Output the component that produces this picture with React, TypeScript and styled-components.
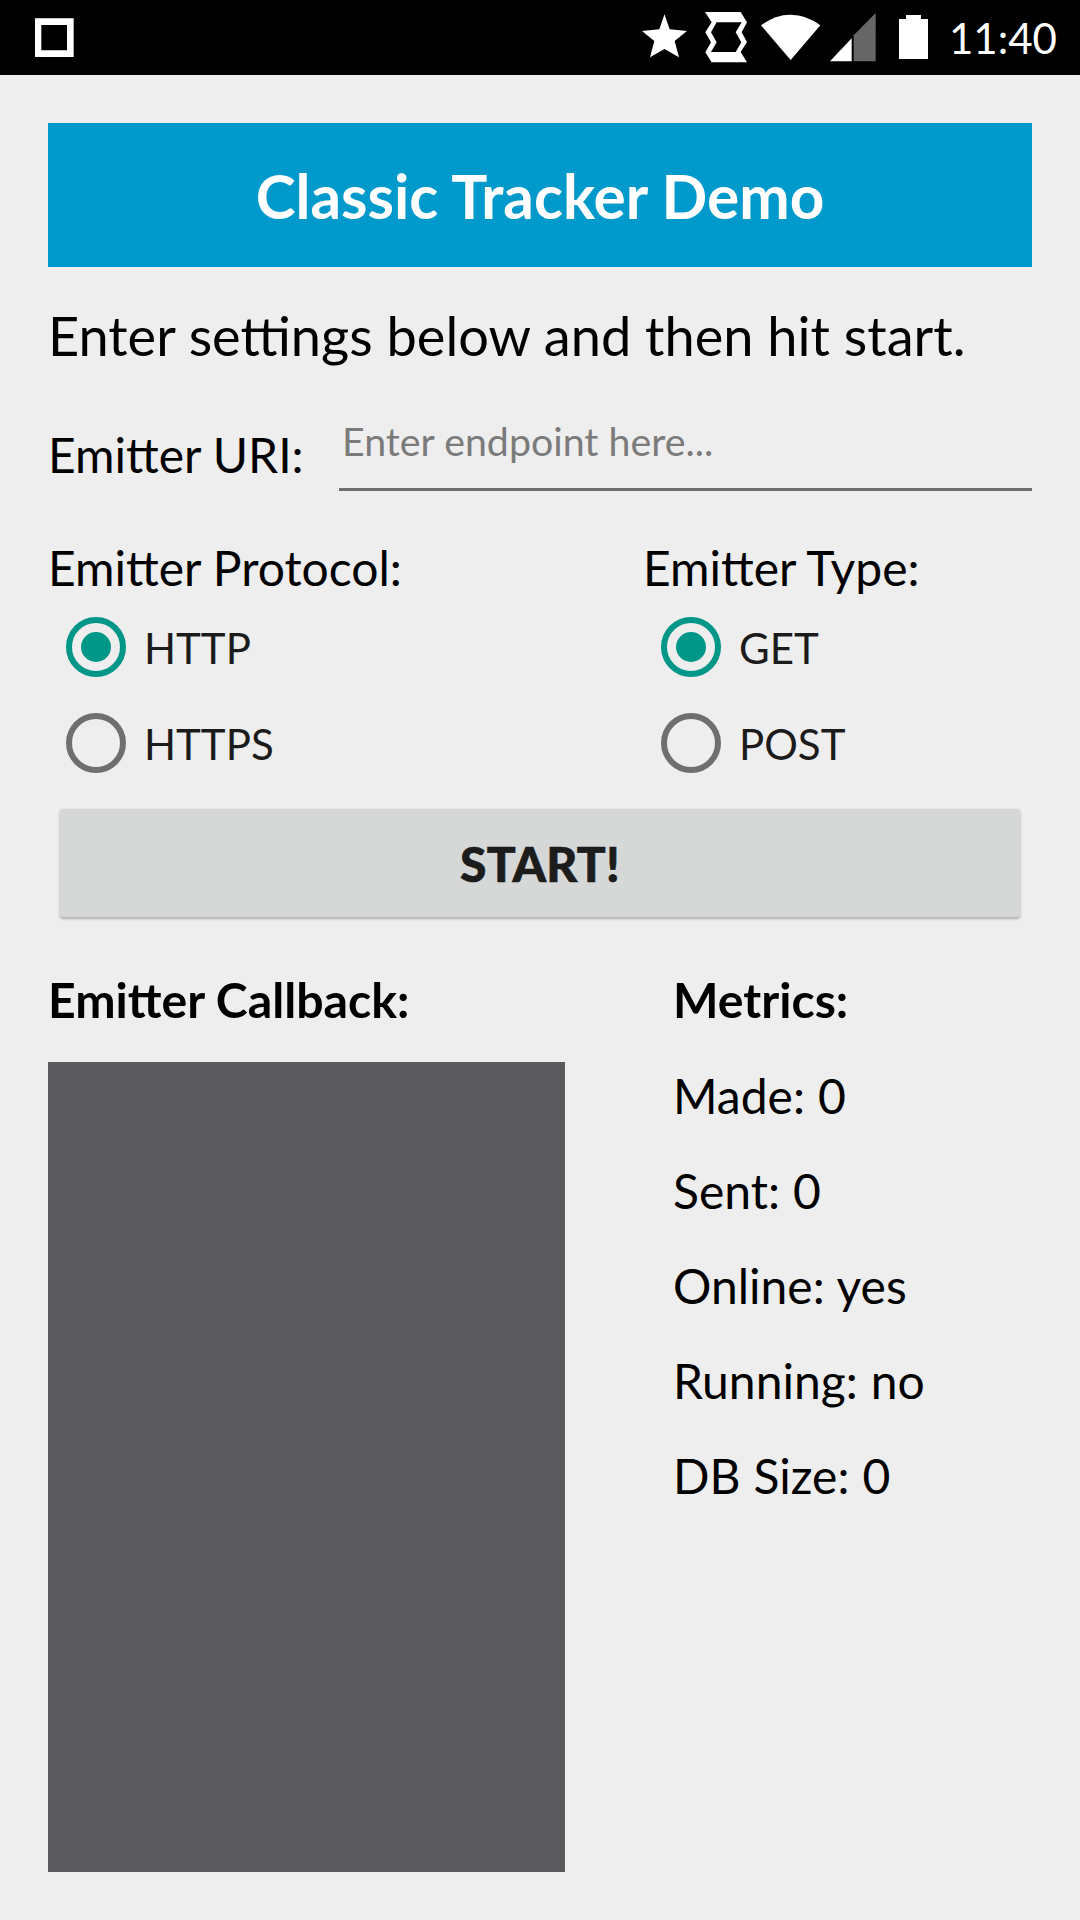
import React, { useState } from "react";
import styled, { createGlobalStyle } from "styled-components";

const GlobalStyle = createGlobalStyle`
  *, *::before, *::after { box-sizing: border-box; }
  body {
    margin: 0;
    background: #eeeeee;
    font-family: Lato, "Open Sans", sans-serif;
    color: #000;
  }
`;

const Screen = styled.div`
  display: flex;
  flex-direction: column;
  width: 1080px;
  height: 1920px;
  overflow: hidden;
  background: #eeeeee;
`;

const StatusBar = styled.header`
  display: flex;
  flex: none;
  height: 75px;
  padding: 0 24px 0 35px;
  background: #000;
  color: #fff;
`;

const Icon = styled.svg<{ $w: number; $gap?: number }>`
  display: block;
  flex: none;
  width: ${(p) => p.$w}px;
  height: 75px;
  margin-left: ${(p) => p.$gap ?? 0}px;
  fill: #fff;
`;

const SystemIcons = styled.div`
  display: flex;
  margin-left: auto;
`;

const Clock = styled.time`
  width: 107px;
  margin-left: 21px;
  font-size: 42px;
  line-height: 76px;
  white-space: nowrap;
`;

const Content = styled.main`
  display: flex;
  flex: 1;
  flex-direction: column;
  min-height: 0;
  padding: 48px;
`;

const Title = styled.h1`
  flex: none;
  height: 144px;
  margin: 0;
  background: #0099cc;
  color: #fff;
  font-size: 60.25px;
  font-weight: 700;
  line-height: 146px;
  text-align: center;
`;

const Intro = styled.p`
  flex: none;
  height: 136px;
  margin: 0;
  font-size: 54.15px;
  line-height: 138px;
  white-space: nowrap;
`;

const Label = styled.span<{ $line: number; $bold?: boolean }>`
  display: block;
  flex: none;
  height: ${(p) => p.$line}px;
  font-size: ${(p) => (p.$bold ? 48.2 : 48)}px;
  font-weight: ${(p) => (p.$bold ? 700 : 400)};
  line-height: ${(p) => p.$line}px;
  white-space: nowrap;
`;

const UriRow = styled.div`
  display: flex;
  flex: none;
  align-items: stretch;
  justify-content: space-between;
  height: 88px;
  padding-top: 4px;
`;

const UriField = styled.div`
  width: 693px;
  padding-left: 3px;
  border-bottom: 3px solid #6f6f6f;
  color: #7b7b7b;
  font-size: 39.35px;
  line-height: 68px;
  white-space: nowrap;
`;

const Options = styled.div`
  display: grid;
  flex: none;
  grid-template-columns: 595px 1fr;
  height: 304px;
  padding-top: 49px;
`;

const GroupLabel = styled(Label)`
  margin-bottom: 4px;
`;

const OptionRow = styled.button`
  display: flex;
  align-items: center;
  height: 96px;
  padding: 0 0 0 18px;
  border: 0;
  background: none;
  color: #1b1b1b;
  font-family: inherit;
  font-size: 42px;
  text-align: left;
`;

const OptionText = styled.span`
  padding-top: 2px;
`;

const RadioMark = styled.span<{ $on: boolean }>`
  display: flex;
  align-items: center;
  justify-content: center;
  flex: none;
  width: 60px;
  height: 60px;
  margin-right: 18px;
  border: 6px solid ${(p) => (p.$on ? "#009688" : "#6f6f6f")};
  border-radius: 50%;

  &::after {
    content: "";
    width: 30px;
    height: 30px;
    border-radius: 50%;
    background: ${(p) => (p.$on ? "#009688" : "transparent")};
  }
`;

const StartButton = styled.button`
  flex: none;
  height: 108px;
  margin: 14px 12px 0;
  padding: 2px 0 0;
  border: 0;
  border-radius: 3px;
  background: #d6d8d7;
  box-shadow: 0 2px 3px rgba(0, 0, 0, 0.26), 0 0 2px rgba(0, 0, 0, 0.1);
  color: #1c1c1c;
  font-family: inherit;
  font-size: 48px;
  font-weight: 900;
  letter-spacing: 0.2px;
  line-height: 106px;
  -webkit-text-stroke: 0.6px #1c1c1c;
`;

const Results = styled.section`
  display: grid;
  flex: 1;
  grid-template-columns: 517px 1fr;
  column-gap: 108px;
  min-height: 0;
  padding-top: 53px;
`;

const Column = styled.div`
  display: flex;
  flex-direction: column;
`;

const LogPanel = styled.div`
  flex: 1;
  margin-top: 33px;
  background: #5a5a5c;
`;

const MetricList = styled.div`
  display: flex;
  flex-direction: column;
  padding-top: 19px;
  word-spacing: 0.7px;
`;

function RadioGroup({ label, options }: { label: string; options: string[] }) {
  const [selected, setSelected] = useState(options[0]);
  return (
    <Column role="radiogroup" aria-label={label}>
      <GroupLabel $line={55}>{label}</GroupLabel>
      {options.map((option) => (
        <OptionRow
          key={option}
          type="button"
          role="radio"
          aria-checked={option === selected}
          onClick={() => setSelected(option)}
        >
          <RadioMark $on={option === selected} />
          <OptionText>{option}</OptionText>
        </OptionRow>
      ))}
    </Column>
  );
}

const metrics: [string, string][] = [
  ["Made", "0"],
  ["Sent", "0"],
  ["Online", "yes"],
  ["Running", "no"],
  ["DB Size", "0"],
];

export default function App() {
  return (
    <>
      <GlobalStyle />
      <Screen>
        <StatusBar>
          <Icon $w={39} viewBox="105 0 117 225">
            <path fillRule="evenodd" d="M105 55H221V171H105ZM124 75V151H201V75Z" />
          </Icon>
          <SystemIcons>
            <Icon $w={45} viewBox="36 0 135 225">
              <path d="M103.500 43L119 88L171 93L134 123L147 172L103.500 147L60 172L73 123L36 93L88 88Z" />
            </Icon>
            <Icon $w={42} $gap={18} viewBox="225 0 126 225">
              <path
                fillRule="evenodd"
                d="M225 36H332L351 67L335 97L351 126L332 156L351 187H245L226 157L243 127L226 97L245 67ZM260 67L243 97L260 127L243 156H317L334 127L317 97L335 67Z"
              />
            </Icon>
            <Icon $w={60} $gap={14} viewBox="393 0 180 225">
              <path d="M393 76Q434 44 482 44Q530 44 571 76L482 180Z" />
            </Icon>
            <Icon $w={46} $gap={9} viewBox="30 0 138 225">
              <path d="M30 184L95 115V184Z" />
              <path fill="#666" d="M101 184V106L167 39V184Z" />
            </Icon>
            <Icon $w={29} $gap={23} viewBox="237 0 87 225">
              <path d="M258 45H303V57H324V177H237V57H258Z" />
            </Icon>
          </SystemIcons>
          <Clock>11:40</Clock>
        </StatusBar>

        <Content>
          <Title>Classic Tracker Demo</Title>
          <Intro>Enter settings below and then hit start.</Intro>

          <UriRow>
            <Label $line={95}>Emitter URI:</Label>
            <UriField>Enter endpoint here...</UriField>
          </UriRow>

          <Options>
            <RadioGroup label="Emitter Protocol:" options={["HTTP", "HTTPS"]} />
            <RadioGroup label="Emitter Type:" options={["GET", "POST"]} />
          </Options>

          <StartButton type="button">START!</StartButton>

          <Results>
            <Column>
              <Label $line={59} $bold>
                Emitter Callback:
              </Label>
              <LogPanel />
            </Column>
            <Column>
              <Label $line={59} $bold>
                Metrics:
              </Label>
              <MetricList>
                {metrics.map(([name, value]) => (
                  <Label key={name} $line={95}>
                    {name}: {value}
                  </Label>
                ))}
              </MetricList>
            </Column>
          </Results>
        </Content>
      </Screen>
    </>
  );
}
